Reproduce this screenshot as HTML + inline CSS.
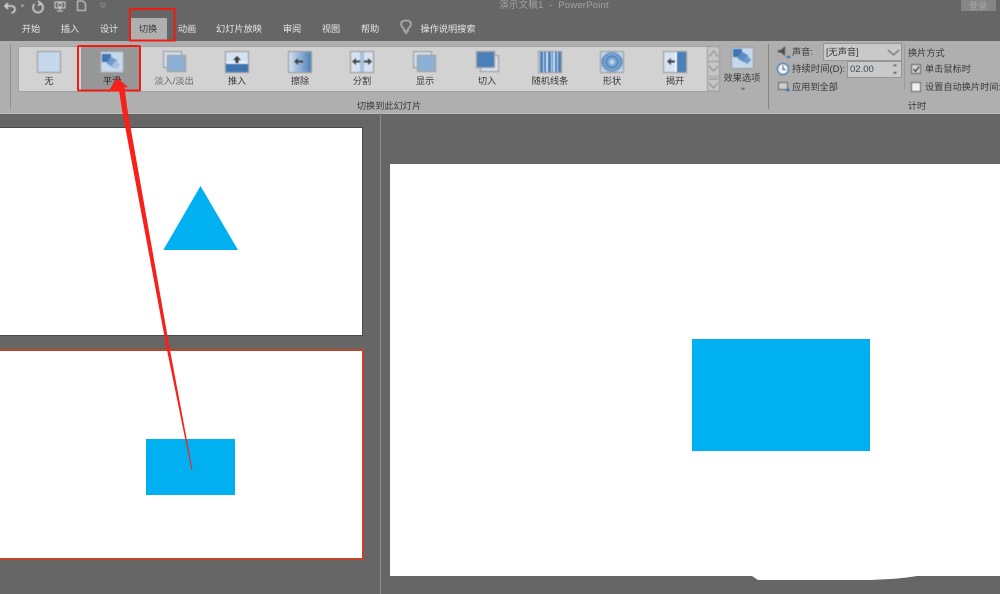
<!DOCTYPE html>
<html lang="zh">
<head>
<meta charset="utf-8">
<title>演示文稿1 - PowerPoint</title>
<style>
html,body{margin:0;padding:0;width:1000px;height:594px;overflow:hidden;background:#666}
body{position:relative;font-family:"Liberation Sans","Noto Sans CJK SC",sans-serif}
.a{position:absolute}
.t{position:absolute;white-space:nowrap;transform:translateX(-50%);font-size:9.2px;line-height:12px;color:#383838;filter:blur(.3px)}
.l{position:absolute;white-space:nowrap;font-size:9.2px;line-height:12px;color:#383838;filter:blur(.3px)}
.tab{color:#e6e6e6;top:23px}
svg{position:absolute;left:0;top:0}
</style>
</head>
<body>
<!-- ribbon -->
<div class="a" style="left:0;top:41px;width:1000px;height:72px;background:#afafaf;border-bottom:1px solid #bcbcbc"></div>
<div class="a" style="left:130px;top:18px;width:37px;height:23px;background:#afafaf"></div>
<div class="a" style="left:18px;top:46px;width:690px;height:44px;background:#d2d2d2;border:1px solid #a3a3a3"></div>
<div class="a" style="left:81px;top:46px;width:60px;height:45px;background:#979797"></div>
<div class="a" style="left:10px;top:44px;width:1px;height:65px;background:#919191"></div>
<div class="a" style="left:768px;top:44px;width:1px;height:65px;background:#858585"></div>
<div class="a" style="left:904px;top:44px;width:1px;height:46px;background:#9c9c9c"></div>

<!-- title / tabs -->
<div class="t" style="left:554px;top:0;color:#a3a3a3;font-size:9.5px;letter-spacing:.2px">演示文稿1 &nbsp;-&nbsp; PowerPoint</div>
<div class="a" style="left:961px;top:0;width:35px;height:11px;background:#858585"></div>
<div class="t" style="left:978px;top:0;color:#a8a8a8">登录</div>
<div class="t tab" style="left:31px">开始</div>
<div class="t tab" style="left:70px">插入</div>
<div class="t tab" style="left:109px">设计</div>
<div class="t" style="left:148px;top:23px;color:#3a3a3a">切换</div>
<div class="t tab" style="left:187px">动画</div>
<div class="t tab" style="left:239px">幻灯片放映</div>
<div class="t tab" style="left:292px">审阅</div>
<div class="t tab" style="left:331px">视图</div>
<div class="t tab" style="left:370px">帮助</div>
<div class="t tab" style="left:448px">操作说明搜索</div>

<!-- gallery labels -->
<div class="t" style="left:49px;top:75px">无</div>
<div class="t" style="left:112px;top:75px;color:#222">平滑</div>
<div class="t" style="left:174px;top:75px;color:#666">淡入/淡出</div>
<div class="t" style="left:237px;top:75px">推入</div>
<div class="t" style="left:300px;top:75px">擦除</div>
<div class="t" style="left:362px;top:75px">分割</div>
<div class="t" style="left:425px;top:75px">显示</div>
<div class="t" style="left:487px;top:75px">切入</div>
<div class="t" style="left:550px;top:75px">随机线条</div>
<div class="t" style="left:612px;top:75px">形状</div>
<div class="t" style="left:675px;top:75px">揭开</div>
<div class="t" style="left:742px;top:72px">效果选项</div>
<div class="t" style="left:389px;top:100px">切换到此幻灯片</div>
<div class="t" style="left:917px;top:100px">计时</div>
<div class="l" style="left:792px;top:46px">声音:</div>
<div class="l" style="left:792px;top:63px;font-size:9.4px">持续时间(D):</div>
<div class="l" style="left:792px;top:81px">应用到全部</div>
<div class="l" style="left:908px;top:47px">换片方式</div>
<div class="l" style="left:925px;top:63px">单击鼠标时</div>
<div class="l" style="left:925px;top:81px">设置自动换片时间:</div>

<!-- sound controls -->
<div class="a" style="left:823px;top:43px;width:79px;height:18px;box-sizing:border-box;background:#c9c9c9;border:1px solid #969696"></div>
<div class="l" style="left:826px;top:46px">[无声音]</div>
<div class="a" style="left:847px;top:61px;width:55px;height:17px;box-sizing:border-box;background:#c9c9c9;border:1px solid #969696"></div>
<div class="l" style="left:850px;top:64px;font-size:9.5px;color:#3a4a5a">02.00</div>

<!-- slides -->
<div class="a" style="left:-2px;top:127px;width:363px;height:207px;background:#fff;border:1px solid #4a4a4a"></div>
<div class="a" style="left:-4px;top:349px;width:364px;height:207px;background:#fff;border:2px solid #c0452a"></div>
<div class="a" style="left:146px;top:439px;width:89px;height:56px;background:#00b0f0"></div>
<div class="a" style="left:380px;top:113px;width:1px;height:481px;background:#8c8c8c"></div>
<div class="a" style="left:390px;top:164px;width:610px;height:412px;background:#fff"></div>
<div class="a" style="left:692px;top:339px;width:178px;height:112px;background:#00b0f0"></div>

<svg width="1000" height="594" viewBox="0 0 1000 594" xmlns="http://www.w3.org/2000/svg">
<defs>
<linearGradient id="g1" x1="0" x2="1"><stop offset="0" stop-color="#d6e3f2"/><stop offset="1" stop-color="#4a7fb8"/></linearGradient>
<radialGradient id="g2"><stop offset="0" stop-color="#dbe7f4"/><stop offset=".55" stop-color="#6e9ccb"/><stop offset=".8" stop-color="#4a80ba"/><stop offset="1" stop-color="#c3d6ea"/></radialGradient>
</defs>
<!-- blob under main slide -->
<path d="M752 576L758 580H870Q900 579 917 576Z" fill="#fff"/>
<!-- triangle -->
<polygon points="200.500,186 163.300,250 238,250" fill="#00b0f0"/>

<g style="filter:blur(.45px)">
<!-- QAT -->
<g fill="none" stroke="#dedede" stroke-width="1.500">
<path d="M8 3L5 6L8 9M5 6H11Q15 6 15 9.500Q15 12 11.500 13"/>
<path d="M41 3.500A5 5 0 1 1 34.500 4M38 1L41 3.500L38 5.500"/>
<path d="M55 2H65V8H55ZM60 8V10M57 11H63" stroke-width="1"/>
<circle cx="60" cy="5" r="2" stroke-width="1"/>
<path d="M77.500 1H83L85.500 3.500V10.500H77.500Z" stroke-width="1"/>
</g>
<path d="M21 5H24L22.500 7Z" fill="#dedede"/>
<path d="M100 3.500H106M100.500 5L103 7.500L105.500 5" fill="none" stroke="#8e8e8e"/>
<!-- bulb -->
<path d="M404 31V28.500Q401 26.500 401 24Q401 20.500 406 20.500Q411 20.500 411 24Q411 26.500 408 28.500V31ZM404.500 33H407.500" fill="none" stroke="#dedede"/>

<!-- gallery icons -->
<g stroke="#a0a0a0" stroke-width="1.200">
<rect x="37.500" y="51.500" width="23" height="21" fill="#c6d8ec"/>
<rect x="100.500" y="51.500" width="23" height="21" fill="#c6d8ec"/>
<rect x="163.500" y="51.500" width="18" height="16" fill="#cfdced"/>
<rect x="167.500" y="55.500" width="18" height="16" fill="#8db0d6"/>
<rect x="225.500" y="51.500" width="23" height="21" fill="#d6e3f2"/>
<rect x="288.500" y="51.500" width="23" height="21" fill="url(#g1)"/>
<rect x="350.500" y="51.500" width="23" height="21" fill="#d6e3f2"/>
<rect x="413.500" y="51.500" width="18" height="16" fill="#cfdced"/>
<rect x="417.500" y="55.500" width="18" height="16" fill="#8db0d6"/>
<rect x="480.500" y="55.500" width="18" height="16" fill="#d6e3f2"/>
<rect x="476.500" y="51.500" width="18" height="16" fill="#4a7fb8"/>
<rect x="538.500" y="51.500" width="23" height="21" fill="#d6e3f2"/>
<rect x="600.500" y="51.500" width="23" height="21" fill="url(#g2)"/>
<rect x="663.500" y="51.500" width="23" height="21" fill="#d6e3f2"/>
<rect x="731.500" y="47.500" width="22" height="21" fill="#c6d8ec"/>
</g>
<!-- smooth icon shapes -->
<rect x="102" y="54" width="9" height="8" fill="#3f75b3"/>
<rect x="108" y="58" width="8" height="8" fill="#6f9bca" transform="rotate(30 112 62)"/>
<rect x="113" y="62" width="6" height="6" fill="#a7c2df" transform="rotate(40 116 65)"/>
<rect x="733" y="49" width="9" height="8" fill="#3f75b3"/>
<rect x="739" y="53" width="8" height="8" fill="#5b8cc0" transform="rotate(30 743 57)"/>
<rect x="744" y="57" width="6" height="6" fill="#6f9bca" transform="rotate(40 747 60)"/>
<!-- push -->
<rect x="226" y="64" width="22" height="8" fill="#3f75b3"/>
<rect x="226" y="62" width="22" height="1.500" fill="#f2f6fa"/>
<path d="M237 56L233 60H235.500V63H238.500V60H241Z" fill="#3c3c3c"/>
<!-- wipe arrow -->
<path d="M294 61.500L298 58V60.500H303V62.500H298V65Z" fill="#444"/>
<!-- split -->
<path d="M352 61.500L356 58V60.500H360V62.500H356V65ZM372 61.500L368 58V60.500H364V62.500H368V65Z" fill="#444"/>
<rect x="360" y="52" width="4" height="20" fill="#8fb0d4" opacity=".7"/>
<!-- random bars -->
<g fill="#4a7fb8">
<rect x="540" y="52" width="3" height="20"/><rect x="544" y="52" width="2" height="20"/>
<rect x="548" y="52" width="3" height="20"/><rect x="552" y="52" width="1" height="20"/>
<rect x="555" y="52" width="2" height="20"/><rect x="558" y="52" width="3" height="20"/>
</g>
<circle cx="612" cy="62" r="8" fill="url(#g2)"/>
<!-- uncover -->
<rect x="677" y="52" width="9" height="20" fill="#4a7fb8"/>
<rect x="675" y="52" width="2" height="20" fill="#f2f6fa"/>
<path d="M667 61.500L671 58V60.500H675V62.500H671V65Z" fill="#444"/>

<!-- gallery scroller -->
<g fill="#c6c6c6" stroke="#9a9a9a">
<rect x="707.500" y="46.500" width="12" height="15"/>
<rect x="707.500" y="61.500" width="12" height="15"/>
<rect x="707.500" y="76.500" width="12" height="14.500"/>
</g>
<path d="M709 57L713.500 51L718 57M709 66L713.500 71L718 66M709 79H718M709 83L713.500 88L718 83" fill="none" stroke="#8a8a8a"/>
<path d="M741 88H745L743 90Z" fill="#444"/>

<!-- timing icons -->
<path d="M778 50H781L785 46V56L781 52.500H778Z" fill="#4d4d4d"/>
<path d="M786 57H789M788 55.500L790 57L788 58.500" stroke="#2f6cb0" fill="none"/>
<circle cx="783" cy="69" r="5.500" fill="#f1f5fa" stroke="#3f75b3" stroke-width="1.200"/>
<path d="M783 65.500V69.500H786" fill="none" stroke="#555"/>
<rect x="778.500" y="82.500" width="9" height="7" fill="#cdcdcd" stroke="#666"/>
<path d="M785 90H789M787.500 88.500L789.500 90L787.500 91.500" stroke="#2f6cb0" fill="none"/>
<!-- dropdown / spinner -->
<path d="M888 50L893.500 55L899 50" fill="none" stroke="#555"/>
<path d="M893 66H897L895 64ZM893 72H897L895 74Z" fill="#444"/>
<!-- checkboxes -->
<rect x="911.500" y="64.500" width="9" height="9" fill="#d5d5d5" stroke="#666"/>
<path d="M913.500 69L915.500 71.500L919 66.500" fill="none" stroke="#333" stroke-width="1.200"/>
<rect x="911.500" y="82.500" width="9" height="9" fill="#efefef" stroke="#666"/>
</g>

<!-- red annotations -->
<rect x="130" y="9" width="44.500" height="31.500" fill="none" stroke="#f01c14" stroke-width="2"/>
<rect x="78" y="46" width="62" height="44.500" rx="1" fill="none" stroke="#f01c14" stroke-width="2"/>
<polygon points="117,78 128,87 124.500,87.500 127.500,110 170,350 192.500,470 191.500,470 167,350 122,110 119,90 108,92" fill="#f8201a"/>
</svg>
</body>
</html>
